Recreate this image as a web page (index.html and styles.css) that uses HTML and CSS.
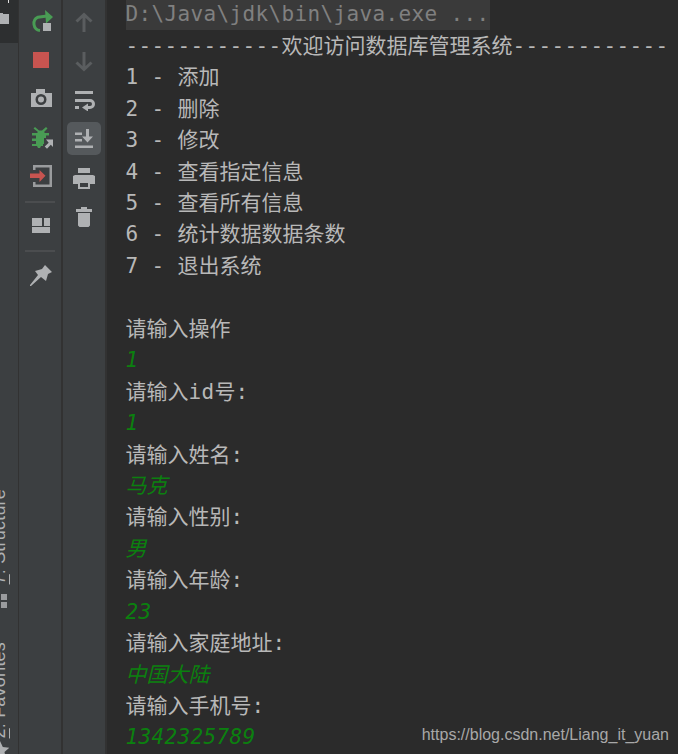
FILE: index.html
```html
<!DOCTYPE html>
<html lang="zh">
<head>
<meta charset="utf-8">
<title>Console</title>
<link rel="stylesheet" href="styles.css">
</head>
<body>
<div class="ide">
  <aside class="strip">
    <div class="project-tab">
      <svg class="tab-icon" width="18" height="43" viewBox="0 0 18 43"><path d="M8 0h1v3H8z" fill="#e0e0e0"/><path d="M0 13h3v1h6v10H0z" fill="#afb1b3"/></svg>
    </div>
    <div class="strip-spacer"></div>
    <div class="strip-item structure">
      <span class="strip-label"><u>7</u>: Structure</span>
      <svg class="strip-icon" width="8" height="14" viewBox="0 0 8 14"><path d="M1 0h6v6H1zM1 8h6v6H1z" fill="#9a9c9e"/></svg>
    </div>
    <div class="strip-item favorites">
      <span class="strip-label"><u>2</u>: Favorites</span>
      <svg class="strip-star" width="20" height="20" viewBox="0 0 20 20"><path d="M10 1l2.800 5.900 6.500.8-4.800 4.400 1.300 6.400L10 15.300l-5.800 3.200 1.300-6.400L.7 7.700l6.500-.8z" fill="#afb1b3"/></svg>
    </div>
  </aside>

  <nav class="toolbar run-bar">
    <svg class="tool" width="24" height="24" viewBox="0 0 24 24"><path d="M11 21.500A7 7 0 0 1 9 8.200L18 7" fill="none" stroke="#499c54" stroke-width="3"/><path d="M16 1l8 7-7 6.500z" fill="#499c54"/><path d="M14 14h8v8h-8z" fill="#afb1b3"/></svg>
    <svg class="tool" width="24" height="24" viewBox="0 0 24 24"><rect x="4" y="4" width="16" height="16" fill="#c75450"/></svg>
    <svg class="tool" width="24" height="24" viewBox="0 0 24 24"><path fill-rule="evenodd" d="M2 6h5V2h9v4h7v14H2zM12 7a5.500 5.500 0 1 0 0 11 5.500 5.500 0 0 0 0-11zM12 9.500a3 3 0 1 1 0 6 3 3 0 0 1 0-6z" fill="#afb1b3"/></svg>
    <svg class="tool" width="24" height="24" viewBox="0 0 24 24"><path d="M6 1l4 3.500h3L17 1l1.500 1.500L15 6l1 1h4v2.500h-3V12h-2v6h-1v2h-2l-1 2H9l-1-2H3v-2h4v-3H3v-2.500h4V9.500H3V7h5l1-1-4.500-3.500z" fill="#499c54"/><path d="M15 12h9v9.500l-2-2-3.500 4-3.500-3.500 3.500-3.500z" fill="#3c3f41"/><path d="M17 13.500h7v7.500l-2.200-2.200-3.800 4-2.300-2.300 4-3.800z" fill="#afb1b3"/></svg>
    <svg class="tool" width="24" height="24" viewBox="0 0 24 24"><path d="M4 0h19v22H4v-5h2.500v2.500h14v-17h-14V5H4z" fill="#9a9c9e"/><path d="M1 8.500h9.500V5l6 5.700-6 6.300v-4H1z" fill="#c75450"/></svg>
    <div class="sep"></div>
    <svg class="tool short" width="24" height="24" viewBox="0 0 24 24"><path d="M3 4h10v8H3zM15 4h6v8h-6zM3 13h18v6H3z" fill="#afb1b3"/></svg>
    <div class="sep"></div>
    <svg class="tool short" width="24" height="24" viewBox="0 0 24 24"><path d="M16 2l7 7-4 2-2 7-5-4-10 9H1v-1l8-10-3-4 7-2z" fill="#afb1b3"/></svg>
  </nav>

  <nav class="toolbar output-bar">
    <svg class="tool" width="24" height="24" viewBox="0 0 24 24"><path d="M12 23V6M4.500 12.500L12 5.500l7.500 7" fill="none" stroke="#5a5d5f" stroke-width="3"/></svg>
    <svg class="tool" width="24" height="24" viewBox="0 0 24 24"><path d="M12 4v17M4.500 14.500l7.500 7 7.500-7" fill="none" stroke="#5a5d5f" stroke-width="3"/></svg>
    <svg class="tool" width="24" height="24" viewBox="0 0 24 24"><path d="M3 4h18v3H3zM3 19h4v3H3z" fill="#afb1b3"/><path d="M3 13.500h15a3.500 3.500 0 0 1 0 7h-3" fill="none" stroke="#afb1b3" stroke-width="3"/><path d="M16 16.500v8l-6-4z" fill="#afb1b3"/></svg>
    <div class="tool toggled">
      <svg width="24" height="24" viewBox="0 0 24 24"><path d="M3 5.500h7V8H3zM3 12h7v2.500H3zM3 18.500h18V21H3zM14 2h3v7.500h4l-5.500 6-5.500-6h4z" fill="#afb1b3"/></svg>
    </div>
    <svg class="tool" width="24" height="24" viewBox="0 0 24 24"><path fill-rule="evenodd" d="M6 1h12v5H6zM3 8h18l2 1v8h-5v5H6v-5H1V9zM8 16v4h8v-4z" fill="#afb1b3"/></svg>
    <svg class="tool" width="24" height="24" viewBox="0 0 24 24"><path d="M9 1h6v2h5v3H4V3h5zM6 7h12v12.500L16.500 21h-9L6 19.500z" fill="#afb1b3"/></svg>
  </nav>

  <main class="console">
    <div class="line cmd"><span class="cmd-text lat">D:\Java\jdk\bin\java.exe ...</span></div>
    <div class="line"><span class="lat">------------</span>欢迎访问数据库管理系统<span class="lat">------------</span></div>
    <div class="line"><span class="lat">1 - </span>添加</div>
    <div class="line"><span class="lat">2 - </span>删除</div>
    <div class="line"><span class="lat">3 - </span>修改</div>
    <div class="line"><span class="lat">4 - </span>查看指定信息</div>
    <div class="line"><span class="lat">5 - </span>查看所有信息</div>
    <div class="line"><span class="lat">6 - </span>统计数据数据条数</div>
    <div class="line"><span class="lat">7 - </span>退出系统</div>
    <div class="line">&nbsp;</div>
    <div class="line">请输入操作</div>
    <div class="line input lat">1</div>
    <div class="line">请输入<span class="lat">id</span>号:</div>
    <div class="line input lat">1</div>
    <div class="line">请输入姓名:</div>
    <div class="line input">马克</div>
    <div class="line">请输入性别:</div>
    <div class="line input">男</div>
    <div class="line">请输入年龄:</div>
    <div class="line input lat">23</div>
    <div class="line">请输入家庭地址:</div>
    <div class="line input">中国大陆</div>
    <div class="line">请输入手机号:</div>
    <div class="line input lat">1342325789</div>
    <div class="watermark">https://blog.csdn.net/Liang_it_yuan</div>
  </main>
</div>
</body>
</html>
```

FILE: styles.css
```css
* { box-sizing: border-box; }
html, body { margin: 0; height: 100%; overflow: hidden; background: #2b2b2b; }
.ide { display: flex; width: 678px; height: 754px; overflow: hidden; }

.strip {
  width: 19px; flex: none; background: #3c3f41; border-right: 1px solid #323232;
  display: flex; flex-direction: column; overflow: hidden;
}
.project-tab { height: 43px; background: #2d2f30; flex: none; }
.tab-icon { display: block; }
.strip-spacer { height: 446px; flex: none; }
.strip-item { display: flex; flex-direction: column; align-items: flex-start; flex: none; }
.strip-label {
  writing-mode: vertical-rl; transform: rotate(180deg);
  font: 18px/18px "Liberation Sans", sans-serif; letter-spacing: .2px; color: #afb1b3;
  margin-left: -10px; white-space: nowrap;
}
.structure { height: 153px; }
.strip-icon { margin: 10px 0 0 0; }
.strip-star { margin: 2px 0 0 -10px; flex: none; }

.toolbar {
  width: 44px; flex: none; background: #3c3f41; border-right: 2px solid #323232;
  display: flex; flex-direction: column; align-items: center; padding-top: 9px;
}
.tool { display: block; flex: none; margin-bottom: 15px; width: 24px; height: 24px; }
.run-bar .tool { margin-left: 2px; }
.tool.short { margin-bottom: 15px; }
.sep { width: 30px; height: 2px; background: #4b4d4f; flex: none; margin: -3px 0 11px; }
.toggled {
  width: 34px; height: 33px; background: #55595c; border-radius: 5px;
  display: flex; align-items: center; justify-content: center; margin: -4px 0 12px;
}

.console {
  flex: 1; background: #2b2b2b; position: relative; padding-left: 18.500px; min-width: 0;
  font: 21px/31.4px "DejaVu Sans Mono", "Noto Sans CJK SC", monospace; color: #b8b8b8; overflow: hidden;
}
.line { height: 31.450px; white-space: pre; }
.cmd { margin-top: -.6px; }
.lat { letter-spacing: .36px; }
.cmd-text { display: inline-block; height: 30.600px; background: #3a3a3a; color: #808080; }
.input { color: #0b800f; font-style: italic; }
.watermark {
  position: absolute; right: 9px; bottom: 9px;
  font: 16px/20px "Liberation Sans", Arial, sans-serif; color: #a8a8a8;
}
```
